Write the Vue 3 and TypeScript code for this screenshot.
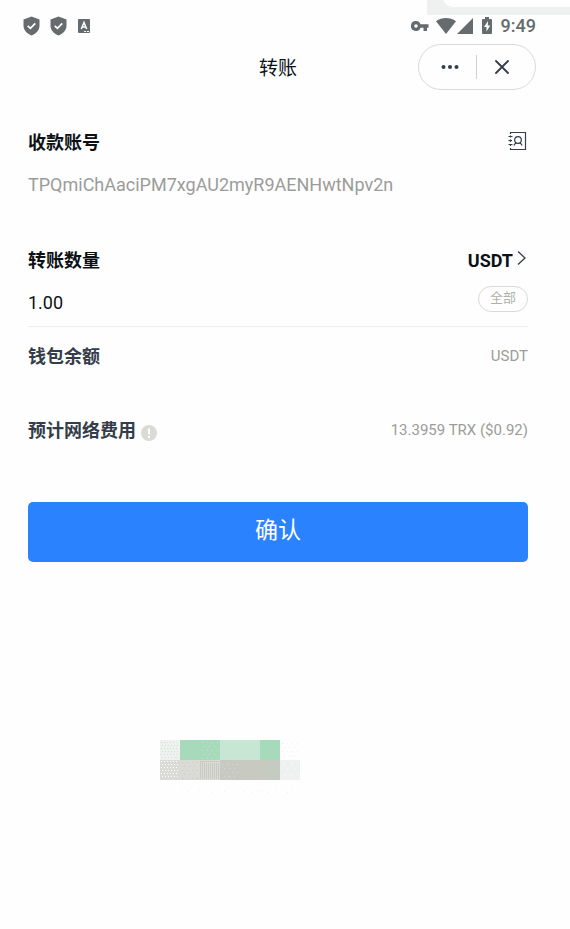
<script setup lang="ts">
import { ref } from 'vue'

interface Tile {
  x: number
  y: number
  w: number
  fill: string
}

interface Dots {
  x: number
  y: number
  fill: string
  step: number
}

const address = ref('TPQmiChAaciPM7xgAU2myR9AENHwtNpv2n')
const amount = ref('1.00')
const token = ref('USDT')
const fee = '13.3959 TRX ($0.92)'

const tiles: Tile[] = [
  { x: 0, y: 0, w: 20, fill: '#eff1f0' },
  { x: 20, y: 0, w: 40, fill: '#a6dabb' },
  { x: 60, y: 0, w: 40, fill: '#c8e6d4' },
  { x: 100, y: 0, w: 20, fill: '#a6dabb' },
  { x: 0, y: 20, w: 20, fill: '#dadad6' },
  { x: 20, y: 20, w: 40, fill: '#dadad6' },
  { x: 60, y: 20, w: 60, fill: '#c8c9c0' },
  { x: 120, y: 20, w: 20, fill: '#eff1f0' },
]

const dots: Dots[] = [
  { x: 1, y: 2, fill: '#c8e6d4', step: 3 },
  { x: 42, y: 2, fill: '#c8e6d4', step: 5 },
  { x: 122, y: 3, fill: '#eff1f0', step: 5 },
  { x: 1, y: 21, fill: '#ffffff', step: 3 },
  { x: 22, y: 22, fill: '#c8c9c0', step: 5 },
  { x: 62, y: 24, fill: '#dadad6', step: 5 },
  { x: 102, y: 22, fill: '#a6dabb', step: 4 },
  { x: 124, y: 23, fill: '#ffffff', step: 7 },
]

function dotPath(d: Dots): string {
  const rowEnd = d.y < 20 ? 19 : 39
  const colEnd = Math.floor(d.x / 20) * 20 + 19
  let path = ''
  let row = 0
  for (let y = d.y; y < rowEnd; y += d.step > 3 ? d.step - 1 : 3) {
    const shift = row % 2 === 0 ? 0 : Math.floor(d.step / 2)
    for (let x = d.x + shift; x < colEnd; x += d.step) path += `M${x} ${y}h1v1h-1z`
    row += 1
  }
  return path
}

const strayDots = [22, 28, 34, 39, 45, 51, 57, 64, 69, 74, 83, 91, 97, 101, 108, 115, 122, 127, 132]
</script>

<template>
  <div class="screen">
    <div class="corner" aria-hidden="true"></div>

    <header class="status">
      <div class="status-left">
        <svg v-for="n in 2" :key="n" class="shield" width="17" height="20" viewBox="0 0 17 20">
          <path d="M8.500 0.500L16.500 3.500V9.500C16.500 14 13.200 17.800 8.500 19.500C3.800 17.800 .5 14 .5 9.500V3.500Z" fill="#666b6e" />
          <path d="M4.800 9.800l2.600 2.500 4.900-5" fill="none" stroke="#fff" stroke-width="1.800" />
        </svg>
        <svg class="letter" width="12" height="14" viewBox="0 0 12 14">
          <rect width="12" height="14" rx="1" fill="#666b6e" />
          <path d="M3.300 10L6 3.500L8.700 10M4.300 8h3.400" fill="none" stroke="#fff" stroke-width="1.500" />
          <path d="M6 12.500h5" stroke="#fff" stroke-width="1" stroke-dasharray="2 1" />
        </svg>
      </div>
      <div class="status-right">
        <svg class="key" width="18" height="10" viewBox="0 0 18 10">
          <path fill-rule="evenodd" fill="#666b6e" d="M5 0a5 5 0 0 1 4.600 3.300H17.500V6.700H16V10H12.500V6.700H9.600A5 5 0 1 1 5 0ZM5 3.200A1.800 1.800 0 1 0 5 6.800A1.800 1.800 0 0 0 5 3.200Z" />
        </svg>
        <svg class="wifi" width="20" height="16" viewBox="0 0 20 16">
          <path d="M0 3.200C6-1 14-1 20 3.200L10 16Z" fill="#666b6e" />
        </svg>
        <svg class="signal" width="16" height="16" viewBox="0 0 16 16">
          <path d="M16 0V16H0Z" fill="#666b6e" />
        </svg>
        <svg class="battery" width="10" height="17" viewBox="0 0 10 17">
          <path d="M3 0h4v2h2a1 1 0 0 1 1 1v13a1 1 0 0 1-1 1H1a1 1 0 0 1-1-1V3a1 1 0 0 1 1-1h2Z" fill="#666b6e" />
          <path d="M6 4L2 10h2.500v4.500L8.200 8.500H5.800Z" fill="#fff" />
        </svg>
        <time class="clock">9:49</time>
      </div>
    </header>

    <nav class="nav">
      <h1 class="title">转账</h1>
      <div class="capsule">
        <button type="button" class="capsule-button" aria-label="更多">
          <svg width="18" height="6" viewBox="0 0 18 6" fill="#343d49">
            <circle cx="2.500" cy="3" r="2" />
            <circle cx="9" cy="3" r="2" />
            <circle cx="15.500" cy="3" r="2" />
          </svg>
        </button>
        <span class="capsule-line"></span>
        <button type="button" class="capsule-button" aria-label="关闭">
          <svg width="14" height="14" viewBox="0 0 14 14">
            <path d="M1 1l12 12M13 1L1 13" stroke="#343d49" stroke-width="1.800" stroke-linecap="round" />
          </svg>
        </button>
      </div>
    </nav>

    <main class="form">
      <section class="account">
        <div class="row">
          <label class="label" for="address">收款账号</label>
          <button type="button" class="bare" aria-label="地址簿">
            <svg class="book" width="19" height="20" viewBox="0 0 19 20" fill="none" stroke="#343d49">
              <path d="M2.500 3V1.500H17.500V18.500H2.500V17M2.500 4.500V6.500M2.500 8.500V11M2.500 13V15" stroke-width="1.200" />
              <path d="M0.500 5.500h4M0.500 9.500h3.500M0.500 13.500h4" />
              <circle cx="10" cy="9" r="3.300" stroke-width="1.200" />
              <path d="M6 14.500C6.500 12.800 7.700 12.500 8.300 12M14 14.500C13.500 12.800 12.300 12.500 11.700 12" stroke-width="1.200" />
            </svg>
          </button>
        </div>
        <input id="address" v-model="address" class="field address" type="text" />
      </section>

      <section class="amount">
        <div class="row">
          <label class="label" for="amount">转账数量</label>
          <button type="button" class="bare token">
            {{ token }}
            <svg class="chevron" width="9" height="16" viewBox="0 0 9 16">
              <path d="M1 1.500L8 8L1 14.500" fill="none" stroke="#343d49" stroke-width="1.300" />
            </svg>
          </button>
        </div>
        <div class="row entry">
          <input id="amount" v-model="amount" class="field" type="text" inputmode="decimal" />
          <button type="button" class="all">全部</button>
        </div>
      </section>

      <div class="row balance">
        <span class="label muted">钱包余额</span>
        <span class="value">{{ token }}</span>
      </div>

      <div class="row fee">
        <span class="label muted with-icon">
          预计网络费用
          <svg class="info" width="16" height="16" viewBox="0 0 16 16">
            <circle cx="8" cy="8" r="8" fill="#dadad6" />
            <path d="M8 3.500v6M8 11v2" stroke="#fff" stroke-width="2" />
          </svg>
        </span>
        <span class="value">{{ fee }}</span>
      </div>

      <button type="button" class="confirm">确认</button>
    </main>

    <svg class="mosaic" width="140" height="54" viewBox="0 0 140 54" shape-rendering="crispEdges" aria-hidden="true">
      <rect v-for="(t, i) in tiles" :key="'t' + i" :x="t.x" :y="t.y" :width="t.w" height="20" :fill="t.fill" />
      <path v-for="(d, i) in dots" :key="'d' + i" :d="dotPath(d)" :fill="d.fill" />
      <path d="M40.500 21v18M42.500 21v18M44.500 23v16M46.500 23v16M48.500 23v16M50.500 23v16M52.500 23v16M54.500 23v16M56.500 23v16M58.500 23v16M41 21.500h18" stroke="#c8c9c0" />
      <rect v-for="(x, i) in strayDots" :key="'s' + i" :x="x" :y="50 + (i % 3)" width="1" height="1" fill="#eff1f0" />
    </svg>
  </div>
</template>

<style>
body {
  margin: 0;
  background: #fefefe;
}
</style>

<style scoped>
.screen {
  position: relative;
  padding-right: 14px;
  font-family: Roboto, "Noto Sans CJK SC", sans-serif;
  color: #0c1116;
}

button {
  padding: 0;
  border: 0;
  background: none;
  font-family: inherit;
  color: inherit;
  cursor: pointer;
}

svg {
  display: block;
  flex: none;
}

.corner {
  position: absolute;
  top: 0;
  right: 0;
  width: 143px;
  height: 15px;
  background: #eff1f0;
  overflow: hidden;
}

.corner::before {
  content: "";
  position: absolute;
  top: -13px;
  left: 16px;
  right: -20px;
  height: 20px;
  border-radius: 14px;
  background: #fefefe;
}

.status {
  display: flex;
  justify-content: space-between;
  align-items: center;
  height: 28px;
  padding: 12px 20px 4px 23px;
}

.status-left,
.status-right {
  display: flex;
  align-items: center;
}

.shield {
  margin-right: 10px;
}

.letter {
  margin-left: 1px;
}

.wifi {
  margin-left: 7px;
}

.signal {
  margin-left: 1px;
}

.battery {
  margin-left: 9px;
  margin-bottom: 2px;
}

.clock {
  margin-left: 9px;
  font-size: 18px;
  font-weight: 500;
  line-height: 24px;
  color: #666b6e;
}

.nav {
  display: grid;
  grid-template-columns: 1fr auto 1fr;
  align-items: center;
  padding: 0 20px;
}

.title {
  grid-column: 2;
  margin: 0;
  padding-top: 4px;
  font-size: 19px;
  font-weight: 400;
  line-height: 28px;
}

.capsule {
  grid-column: 3;
  justify-self: end;
  display: flex;
  align-items: center;
  box-sizing: border-box;
  width: 118px;
  height: 46px;
  padding: 0 7px 0 5px;
  border: 1px solid #dadad6;
  border-radius: 23px;
}

.capsule-button {
  display: grid;
  place-items: center;
  flex: 1;
  height: 44px;
}

.capsule-line {
  width: 1px;
  height: 24px;
  background: #d0d1cd;
}

.form {
  padding: 41px 28px 0;
}

.row {
  display: flex;
  justify-content: space-between;
  align-items: center;
}

.label {
  font-size: 18px;
  font-weight: 700;
  line-height: 24px;
}

.muted {
  color: #343d49;
}

.field {
  display: block;
  box-sizing: border-box;
  min-width: 0;
  width: 100%;
  height: 24px;
  padding: 0;
  border: 0;
  outline: 0;
  background: none;
  font-family: inherit;
  font-size: 18px;
  line-height: 24px;
  color: inherit;
}

.address {
  margin-top: 18px;
  color: #9b9c99;
}

.amount {
  margin-top: 52px;
  border-bottom: 1px solid #eceeed;
}

.token {
  display: flex;
  align-items: center;
  gap: 4px;
  font-size: 18px;
  font-weight: 700;
  line-height: 24px;
}

.book {
  margin: 0 1px 4px 0;
}

.chevron {
  margin: 0 2px 6px 0;
}

.entry {
  align-items: flex-start;
  padding: 13px 0 14px;
}

.entry .field {
  flex: 1;
  margin-top: 5px;
  height: 21px;
  padding-top: 2px;
}

.all {
  width: 50px;
  height: 26px;
  border: 1px solid #dadad6;
  border-radius: 13px;
  font-size: 13px;
  line-height: 20px;
  padding-bottom: 2px;
  color: #b0b1aa;
}

.value {
  padding-bottom: 2px;
  font-size: 15px;
  line-height: 24px;
  color: #9b9c99;
}

.balance {
  margin-top: 17px;
}

.fee {
  margin-top: 48px;
}

.with-icon {
  display: flex;
  align-items: center;
  gap: 5px;
}

.info {
  margin-top: 4px;
}

.confirm {
  display: block;
  width: 100%;
  height: 60px;
  margin-top: 58px;
  padding-bottom: 2px;
  border-radius: 5px;
  background: #2a82ff;
  font-size: 23px;
  line-height: 32px;
  color: #fff;
}

.mosaic {
  margin: 178px 0 0 160px;
}
</style>
